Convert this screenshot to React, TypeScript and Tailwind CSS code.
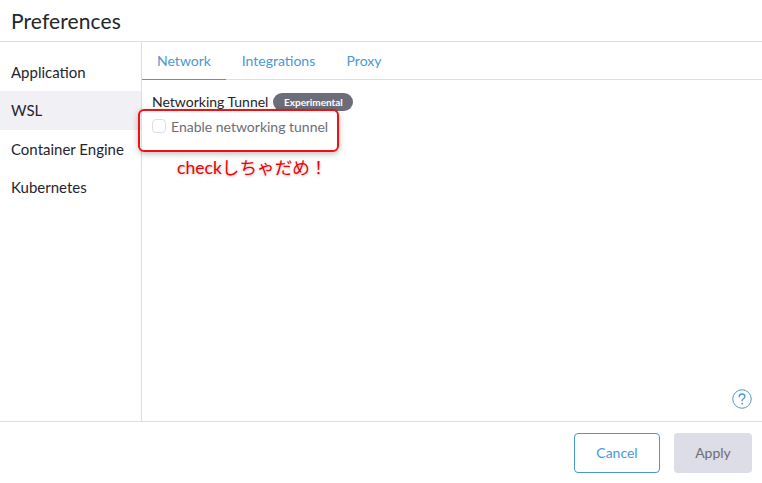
export default function App() {
  const sidebarItems = ["Application", "WSL", "Container Engine", "Kubernetes"];

  return (
    <div className="relative flex h-[483px] w-[762px] flex-col overflow-hidden bg-white font-['Lato','Noto_Sans_CJK_JP',sans-serif] text-[#1f2430]">
      <header className="flex h-[42px] shrink-0 items-center border-b border-[#dcdde6] px-[11px] pb-[1px]">
        <h1 className="text-[21px] leading-none tracking-[0.1px] text-[#22252b]">Preferences</h1>
      </header>

      <div className="flex min-h-0 flex-1">
        <nav className="w-[142px] shrink-0 border-r border-[#dcdde6] pt-[10.5px]">
          {sidebarItems.map((item) => (
            <div
              key={item}
              className={`flex h-[38.5px] items-center pl-[11px] text-[15px] whitespace-nowrap ${
                item === "WSL" ? "bg-[#f0f0f5]" : ""
              }`}
            >
              {item}
            </div>
          ))}
        </nav>

        <main className="relative flex min-w-0 flex-1 flex-col">
          <div className="flex h-[38px] shrink-0 border-b border-[#dcdde6] text-[14px] text-[#4a98d3]">
            <div className="-mb-px flex w-[84px] items-center justify-center border-b border-[#4a98d3]">Network</div>
            <div className="flex w-[105px] items-center justify-center">Integrations</div>
            <div className="flex w-[66px] items-center justify-center">Proxy</div>
          </div>

          <section className="flex-1 pt-[13px] pl-[10px]">
            <div className="flex h-[18px] items-center text-[14px]">
              <span className="-mt-[2px] text-[#22252b]">Networking Tunnel</span>
              <span className="ml-[5px] flex h-[18px] w-[80px] items-center justify-center rounded-full bg-[#6c6d78] pt-[1px] text-[10px] font-bold text-white">
                Experimental
              </span>
            </div>
            <label className="mt-[6px] flex h-[18px] items-center text-[14px] text-[#6c6d78]">
              <span className="h-[14px] w-[14px] rounded-[4px] border border-[#dcdde6] bg-white" />
              <span className="ml-[5px]">Enable networking tunnel</span>
            </label>
          </section>

          <div className="flex justify-end pr-[10px] pb-[12px]">
            <svg width="20" height="20" viewBox="0 0 20 20" fill="none" aria-label="Help">
              <circle cx="10" cy="10" r="9.25" stroke="#4a98d3" strokeWidth="1" />
              <path
                d="M7.2 7.7C7.3 6 8.5 5 10.1 5c1.6 0 2.8 1 2.8 2.4 0 1.1-.6 1.7-1.5 2.3-.9.6-1.3 1.1-1.3 2.2"
                stroke="#4a98d3"
                strokeWidth="1.3"
                strokeLinecap="round"
              />
              <circle cx="10.1" cy="14.6" r="0.9" fill="#4a98d3" />
            </svg>
          </div>
        </main>
      </div>

      <footer className="flex h-[62px] shrink-0 items-start justify-end gap-[14px] border-t border-[#dcdde6] pt-[11px] pr-[10px] text-[14px]">
        <button className="h-[40px] w-[86px] rounded-[4px] border border-[#4a98d3] bg-white pb-[2px] text-[#4a98d3]">Cancel</button>
        <button className="h-[40px] w-[78px] rounded-[4px] bg-[#dcdde6] pb-[2px] text-[#6c6d78]">Apply</button>
      </footer>

      {/* red annotation drawn over the screenshot */}
      <div className="absolute top-[109px] left-[138px] h-[43px] w-[201px] rounded-[6px] border-2 border-[#f01010] shadow-[0_2px_6px_rgba(0,0,0,0.25)]" />
      <div className="absolute top-[157px] left-[177px] text-[17.6px] leading-[22px] whitespace-nowrap text-[#f40000] [text-shadow:0_1px_3px_rgba(0,0,0,0.25)]">
        checkしちゃだめ！
      </div>
    </div>
  );
}
